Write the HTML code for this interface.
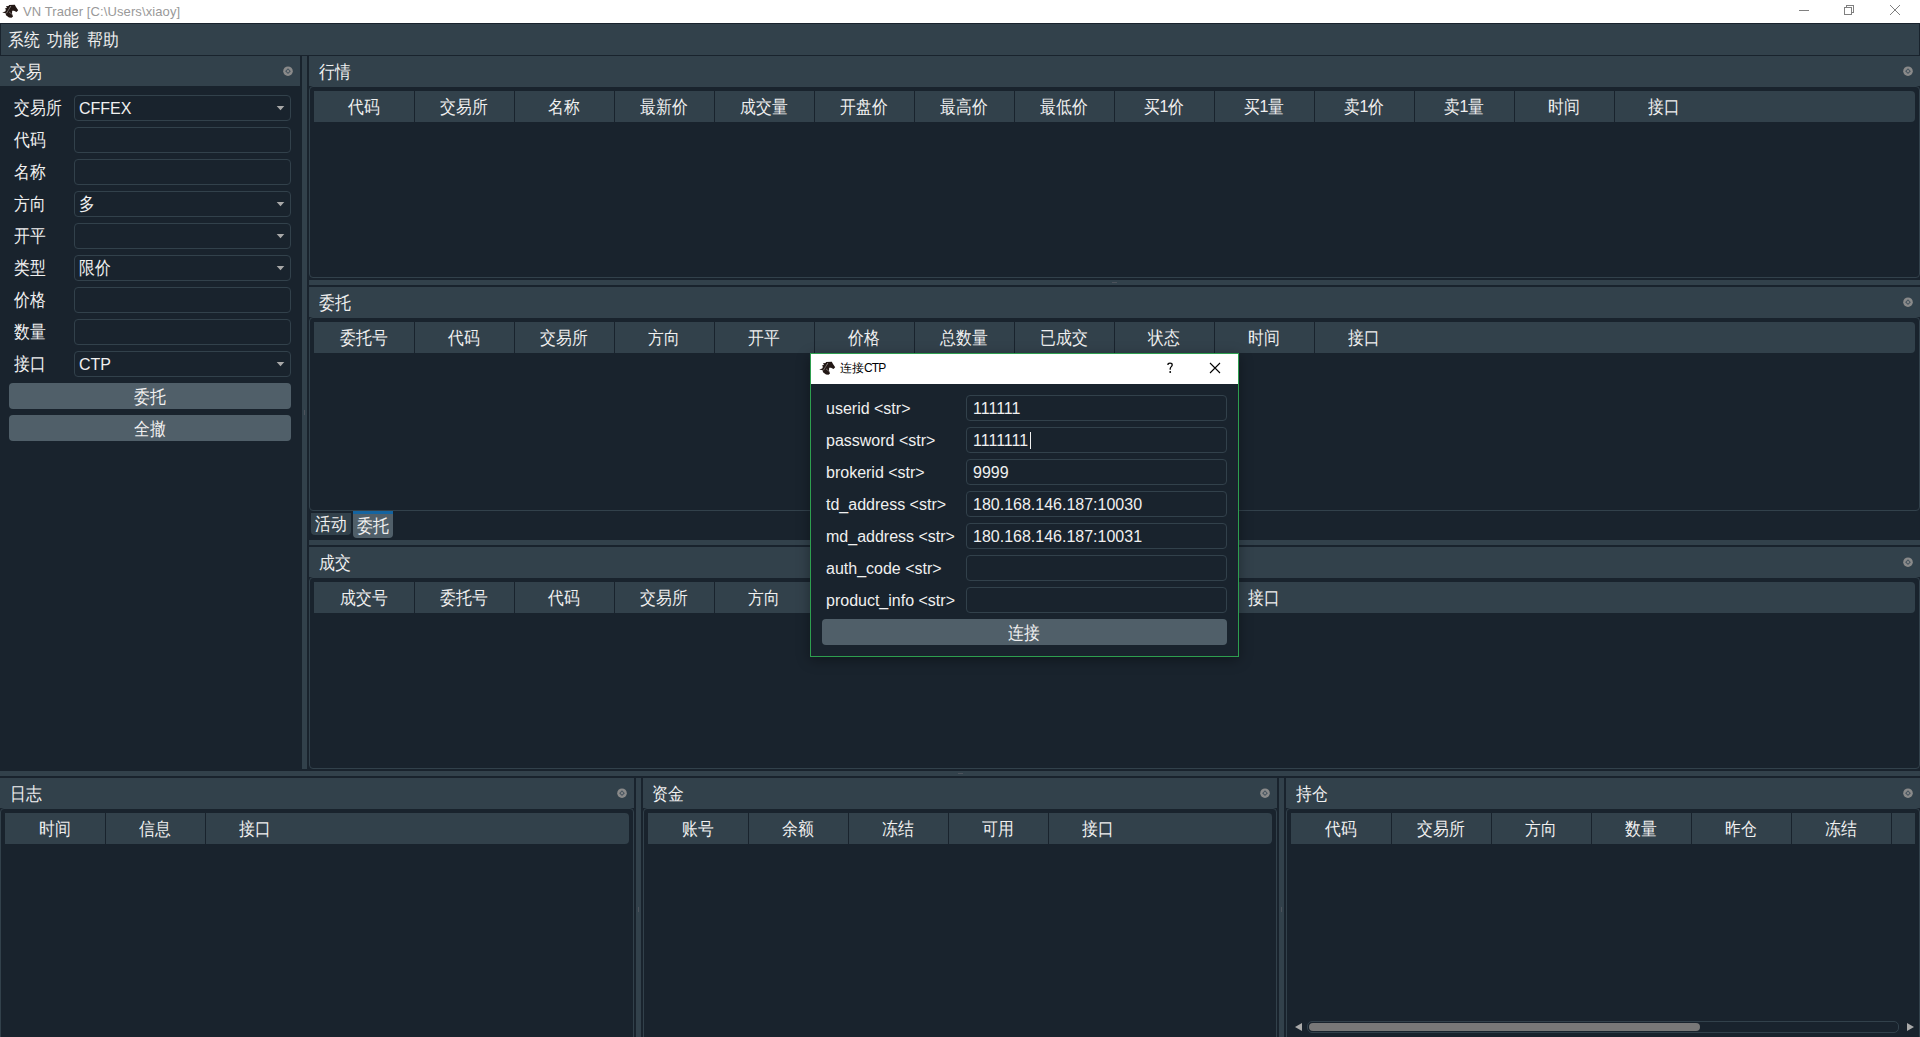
<!DOCTYPE html>
<html><head><meta charset="utf-8">
<style>
html,body{margin:0;padding:0;}
body{width:1920px;height:1037px;overflow:hidden;background:#19232D;position:relative;font-family:"Liberation Sans",sans-serif;color:#F0F0F0;font-size:16px;}
.a{position:absolute;box-sizing:border-box;}
.n{background:#32414B;}
.l{background:#505F69;}
.t{position:absolute;white-space:nowrap;line-height:16px;font-size:16px;}
.box{position:absolute;box-sizing:border-box;border:1px solid #32414B;border-radius:4px;background:#19232D;}
.arr{position:absolute;width:0;height:0;border-left:4px solid transparent;border-right:4px solid transparent;border-top:5px solid #AAAAAA;}
.btn{position:absolute;box-sizing:border-box;background:#505F69;border-radius:4px;text-align:center;}
.frame{position:absolute;box-sizing:border-box;border:1px solid #32414B;border-radius:4px;}
.hdr{position:absolute;height:31px;background:#32414B;overflow:hidden;}
.hdr div{position:absolute;top:0;height:31px;width:100px;box-sizing:border-box;border-left:1px solid #19232D;text-align:center;line-height:31px;font-size:16px;padding-right:1px;}
.hdr div:first-child{border-left:none;}
.flt{position:absolute;width:10px;height:10px;box-sizing:border-box;border-radius:50%;border:2px solid #9A9A9A;}
.flt:after{content:"";position:absolute;left:2px;top:2px;width:2px;height:2px;background:#9A9A9A;}
.cj{display:inline-block;transform:scaleY(1.14);transform-origin:50% 0;}
.hdr .cj{transform-origin:50% 13px;}
</style></head><body>
<!-- window title bar -->
<div class="a" style="left:0;top:0;width:1920px;height:23px;background:#FFFFFF;"></div>
<div class="t" style="left:23px;top:5px;font-size:13px;line-height:14px;color:#999999;letter-spacing:0.1px;">VN Trader [C:\Users\xiaoy]</div>
<!-- window controls -->
<svg class="a" style="left:0;top:0;" width="1920" height="23">
<g stroke="#808080" stroke-width="1" fill="none" shape-rendering="crispEdges">
<line x1="1799" y1="10.5" x2="1809" y2="10.5"/>
<rect x="1844.5" y="7.5" width="7" height="7"/>
<polyline points="1846.5,7.5 1846.5,5.5 1853.5,5.5 1853.5,12.5 1851.5,12.5"/>
</g>
<g stroke="#808080" stroke-width="1" fill="none">
<line x1="1890" y1="5" x2="1900" y2="15"/>
<line x1="1900" y1="5" x2="1890" y2="15"/>
</g>
</svg>

<!-- icons -->
<svg class="a" style="left:0;top:0;" width="22" height="22"><path d="M9,5 L14.8,4.8 L16,7 L18.2,10.2 L16.5,12 L14,10.8 L12.2,10.8 L12,13.5 L13,16.5 L11.5,17.8 L9,17.4 L6,15.3 L5.6,13.2 L2.2,12.6 L5.2,11.5 L6,9.7 L4.8,8.7 L7,7.7 L5.9,6.3 L8.6,5.9 Z" fill="#231815"/>
<path d="M10.9,6 L6.4,13.4 M9.4,12.2 L12.6,14.8" stroke="#FFFFFF" stroke-width="0.6" stroke-dasharray="0.9,0.5" fill="none"/></svg>

<!-- menubar -->
<div class="a n" style="left:1px;top:24px;width:1918px;height:31px;"></div>
<div class="t" style="left:8px;top:31px;"><span class="cj">系统</span></div>
<div class="t" style="left:47px;top:31px;"><span class="cj">功能</span></div>
<div class="t" style="left:87px;top:31px;"><span class="cj">帮助</span></div>

<!-- left dock -->
<div class="a n" style="left:0;top:56px;width:300px;height:30px;"></div>
<div class="t" style="left:10px;top:63px;"><span class="cj">交易</span></div>
<svg class="a" style="left:283px;top:66px;" width="10" height="10"><circle cx="5" cy="5.2" r="4.8" fill="#8A8A8A"/><path d="M5,2.3 L7.9,5.2 L5,8.1 L2.1,5.2 Z" fill="#4B5862"/><circle cx="5" cy="5.2" r="1.1" fill="#8A8A8A"/></svg>

<div class="t" style="left:14px;top:99px;"><span class="cj">交易所</span></div>
<div class="box" style="left:74px;top:95px;width:217px;height:26px;"></div>
<div class="t" style="left:79px;top:101px;">CFFEX</div>
<svg class="a" style="left:276px;top:105px;" width="10" height="8"><path d="M0.7,0.9 L8.3,0.9 L4.5,5.3 Z" fill="#A8A8A8"/></svg>
<div class="t" style="left:14px;top:131px;"><span class="cj">代码</span></div>
<div class="box" style="left:74px;top:127px;width:217px;height:26px;"></div>
<div class="t" style="left:14px;top:163px;"><span class="cj">名称</span></div>
<div class="box" style="left:74px;top:159px;width:217px;height:26px;"></div>
<div class="t" style="left:14px;top:195px;"><span class="cj">方向</span></div>
<div class="box" style="left:74px;top:191px;width:217px;height:26px;"></div>
<div class="t" style="left:79px;top:195px;"><span class="cj">多</span></div>
<svg class="a" style="left:276px;top:201px;" width="10" height="8"><path d="M0.7,0.9 L8.3,0.9 L4.5,5.3 Z" fill="#A8A8A8"/></svg>
<div class="t" style="left:14px;top:227px;"><span class="cj">开平</span></div>
<div class="box" style="left:74px;top:223px;width:217px;height:26px;"></div>
<svg class="a" style="left:276px;top:233px;" width="10" height="8"><path d="M0.7,0.9 L8.3,0.9 L4.5,5.3 Z" fill="#A8A8A8"/></svg>
<div class="t" style="left:14px;top:259px;"><span class="cj">类型</span></div>
<div class="box" style="left:74px;top:255px;width:217px;height:26px;"></div>
<div class="t" style="left:79px;top:259px;"><span class="cj">限价</span></div>
<svg class="a" style="left:276px;top:265px;" width="10" height="8"><path d="M0.7,0.9 L8.3,0.9 L4.5,5.3 Z" fill="#A8A8A8"/></svg>
<div class="t" style="left:14px;top:291px;"><span class="cj">价格</span></div>
<div class="box" style="left:74px;top:287px;width:217px;height:26px;"></div>
<div class="t" style="left:14px;top:323px;"><span class="cj">数量</span></div>
<div class="box" style="left:74px;top:319px;width:217px;height:26px;"></div>
<div class="t" style="left:14px;top:355px;"><span class="cj">接口</span></div>
<div class="box" style="left:74px;top:351px;width:217px;height:26px;"></div>
<div class="t" style="left:79px;top:357px;">CTP</div>
<svg class="a" style="left:276px;top:361px;" width="10" height="8"><path d="M0.7,0.9 L8.3,0.9 L4.5,5.3 Z" fill="#A8A8A8"/></svg>
<div class="btn" style="left:9px;top:383px;width:282px;height:26px;"></div>
<div class="t" style="left:134px;top:388px;"><span class="cj">委托</span></div>
<div class="btn" style="left:9px;top:415px;width:282px;height:26px;"></div>
<div class="t" style="left:134px;top:420px;"><span class="cj">全撤</span></div>
<!-- splitters -->
<div class="a n" style="left:302px;top:56px;width:5px;height:713px;"></div>
<div class="a n" style="left:309px;top:280px;width:1611px;height:5px;"></div>
<div class="a n" style="left:309px;top:540px;width:1611px;height:5px;"></div>
<div class="a n" style="left:0;top:771px;width:1920px;height:5px;"></div>
<div class="a n" style="left:636px;top:778px;width:5px;height:259px;"></div>
<div class="a n" style="left:1279px;top:778px;width:5px;height:259px;"></div>

<!-- grips -->
<div class="a" style="left:304px;top:410px;width:1px;height:5px;background:#4C525B;"></div>
<div class="a" style="left:1112px;top:282px;width:5px;height:1px;background:#4C525B;"></div>
<div class="a" style="left:1112px;top:542px;width:5px;height:1px;background:#4C525B;"></div>
<div class="a" style="left:958px;top:773px;width:5px;height:1px;background:#4C525B;"></div>
<div class="a" style="left:638px;top:907px;width:1px;height:5px;background:#4C525B;"></div>
<div class="a" style="left:1281px;top:907px;width:1px;height:5px;background:#4C525B;"></div>
<!-- right docks titles -->
<div class="a n" style="left:309px;top:56px;width:1611px;height:30px;"></div>
<div class="t" style="left:319px;top:63px;"><span class="cj">行情</span></div>
<svg class="a" style="left:1903px;top:66px;" width="10" height="10"><circle cx="5" cy="5.2" r="4.8" fill="#8A8A8A"/><path d="M5,2.3 L7.9,5.2 L5,8.1 L2.1,5.2 Z" fill="#4B5862"/><circle cx="5" cy="5.2" r="1.1" fill="#8A8A8A"/></svg>
<div class="frame" style="left:309px;top:86px;width:1611px;height:192px;"></div>

<div class="a n" style="left:309px;top:287px;width:1611px;height:30px;"></div>
<div class="t" style="left:319px;top:294px;"><span class="cj">委托</span></div>
<svg class="a" style="left:1903px;top:297px;" width="10" height="10"><circle cx="5" cy="5.2" r="4.8" fill="#8A8A8A"/><path d="M5,2.3 L7.9,5.2 L5,8.1 L2.1,5.2 Z" fill="#4B5862"/><circle cx="5" cy="5.2" r="1.1" fill="#8A8A8A"/></svg>
<div class="frame" style="left:309px;top:317px;width:1611px;height:194px;"></div>

<div class="a n" style="left:309px;top:547px;width:1611px;height:30px;"></div>
<div class="t" style="left:319px;top:554px;"><span class="cj">成交</span></div>
<svg class="a" style="left:1903px;top:557px;" width="10" height="10"><circle cx="5" cy="5.2" r="4.8" fill="#8A8A8A"/><path d="M5,2.3 L7.9,5.2 L5,8.1 L2.1,5.2 Z" fill="#4B5862"/><circle cx="5" cy="5.2" r="1.1" fill="#8A8A8A"/></svg>
<div class="frame" style="left:309px;top:577px;width:1611px;height:192px;"></div>

<div class="hdr" style="left:314px;top:91px;width:1601px;border-top-right-radius:4px;border-bottom-right-radius:4px;"><div style="left:0px;"><span class="cj">代码</span></div><div style="left:100px;"><span class="cj">交易所</span></div><div style="left:200px;"><span class="cj">名称</span></div><div style="left:300px;"><span class="cj">最新价</span></div><div style="left:400px;"><span class="cj">成交量</span></div><div style="left:500px;"><span class="cj">开盘价</span></div><div style="left:600px;"><span class="cj">最高价</span></div><div style="left:700px;"><span class="cj">最低价</span></div><div style="left:800px;"><span class="cj">买</span>1<span class="cj">价</span></div><div style="left:900px;"><span class="cj">买</span>1<span class="cj">量</span></div><div style="left:1000px;"><span class="cj">卖</span>1<span class="cj">价</span></div><div style="left:1100px;"><span class="cj">卖</span>1<span class="cj">量</span></div><div style="left:1200px;"><span class="cj">时间</span></div><div style="left:1300px;"><span class="cj">接口</span></div></div>
<div class="hdr" style="left:314px;top:322px;width:1601px;border-top-right-radius:4px;border-bottom-right-radius:4px;"><div style="left:0px;"><span class="cj">委托号</span></div><div style="left:100px;"><span class="cj">代码</span></div><div style="left:200px;"><span class="cj">交易所</span></div><div style="left:300px;"><span class="cj">方向</span></div><div style="left:400px;"><span class="cj">开平</span></div><div style="left:500px;"><span class="cj">价格</span></div><div style="left:600px;"><span class="cj">总数量</span></div><div style="left:700px;"><span class="cj">已成交</span></div><div style="left:800px;"><span class="cj">状态</span></div><div style="left:900px;"><span class="cj">时间</span></div><div style="left:1000px;"><span class="cj">接口</span></div></div>
<div class="hdr" style="left:314px;top:582px;width:1601px;border-top-right-radius:4px;border-bottom-right-radius:4px;"><div style="left:0px;"><span class="cj">成交号</span></div><div style="left:100px;"><span class="cj">委托号</span></div><div style="left:200px;"><span class="cj">代码</span></div><div style="left:300px;"><span class="cj">交易所</span></div><div style="left:400px;"><span class="cj">方向</span></div><div style="left:500px;"><span class="cj">开平</span></div><div style="left:600px;"><span class="cj">价格</span></div><div style="left:700px;"><span class="cj">数量</span></div><div style="left:800px;"><span class="cj">时间</span></div><div style="left:900px;"><span class="cj">接口</span></div></div>
<div class="hdr" style="left:5px;top:813px;width:624px;border-top-right-radius:4px;border-bottom-right-radius:4px;"><div style="left:0px;"><span class="cj">时间</span></div><div style="left:100px;"><span class="cj">信息</span></div><div style="left:200px;"><span class="cj">接口</span></div></div>
<div class="hdr" style="left:648px;top:813px;width:624px;border-top-right-radius:4px;border-bottom-right-radius:4px;"><div style="left:0px;"><span class="cj">账号</span></div><div style="left:100px;"><span class="cj">余额</span></div><div style="left:200px;"><span class="cj">冻结</span></div><div style="left:300px;"><span class="cj">可用</span></div><div style="left:400px;"><span class="cj">接口</span></div></div>
<div class="hdr" style="left:1291px;top:813px;width:624px;"><div style="left:0px;"><span class="cj">代码</span></div><div style="left:100px;"><span class="cj">交易所</span></div><div style="left:200px;"><span class="cj">方向</span></div><div style="left:300px;"><span class="cj">数量</span></div><div style="left:400px;"><span class="cj">昨仓</span></div><div style="left:500px;"><span class="cj">冻结</span></div><div style="left:600px;"><span class="cj">均价</span></div><div style="left:700px;"><span class="cj">盈亏</span></div><div style="left:800px;"><span class="cj">接口</span></div></div>
<!-- bottom docks -->
<div class="a n" style="left:0;top:778px;width:634px;height:30px;"></div>
<div class="t" style="left:10px;top:785px;"><span class="cj">日志</span></div>
<svg class="a" style="left:617px;top:788px;" width="10" height="10"><circle cx="5" cy="5.2" r="4.8" fill="#8A8A8A"/><path d="M5,2.3 L7.9,5.2 L5,8.1 L2.1,5.2 Z" fill="#4B5862"/><circle cx="5" cy="5.2" r="1.1" fill="#8A8A8A"/></svg>
<div class="frame" style="left:0;top:808px;width:634px;height:240px;"></div>

<div class="a n" style="left:643px;top:778px;width:634px;height:30px;"></div>
<div class="t" style="left:652px;top:785px;"><span class="cj">资金</span></div>
<svg class="a" style="left:1260px;top:788px;" width="10" height="10"><circle cx="5" cy="5.2" r="4.8" fill="#8A8A8A"/><path d="M5,2.3 L7.9,5.2 L5,8.1 L2.1,5.2 Z" fill="#4B5862"/><circle cx="5" cy="5.2" r="1.1" fill="#8A8A8A"/></svg>
<div class="frame" style="left:643px;top:808px;width:634px;height:240px;"></div>

<div class="a n" style="left:1286px;top:778px;width:634px;height:30px;"></div>
<div class="t" style="left:1296px;top:785px;"><span class="cj">持仓</span></div>
<svg class="a" style="left:1903px;top:788px;" width="10" height="10"><circle cx="5" cy="5.2" r="4.8" fill="#8A8A8A"/><path d="M5,2.3 L7.9,5.2 L5,8.1 L2.1,5.2 Z" fill="#4B5862"/><circle cx="5" cy="5.2" r="1.1" fill="#8A8A8A"/></svg>
<div class="frame" style="left:1286px;top:808px;width:634px;height:240px;"></div>

<!-- tabs -->
<div class="a n" style="left:311px;top:513px;width:40px;height:22px;border-bottom-left-radius:4px;border-bottom-right-radius:4px;"></div>
<div class="t" style="left:315px;top:515px;"><span class="cj">活动</span></div>
<div class="a l" style="left:353px;top:511px;width:40px;height:27px;border-top:3px solid #1464A0;border-bottom-left-radius:4px;border-bottom-right-radius:4px;"></div>
<div class="t" style="left:357px;top:517px;"><span class="cj">委托</span></div>
<!-- scrollbar -->
<div class="a" style="left:1295px;top:1023px;width:0;height:0;border-top:4px solid transparent;border-bottom:4px solid transparent;border-right:7px solid #AAAAAA;"></div>
<div class="a" style="left:1307px;top:1021px;width:592px;height:12px;border:1px solid #32414B;border-radius:5px;"></div>
<div class="a" style="left:1309px;top:1023px;width:391px;height:8px;background:#787878;border-radius:4px;"></div>
<div class="a" style="left:1907px;top:1023px;width:0;height:0;border-top:4px solid transparent;border-bottom:4px solid transparent;border-left:7px solid #AAAAAA;"></div>

<!-- dialog -->
<div class="a" style="left:810px;top:353px;width:429px;height:304px;border:1px solid #2E9E4F;background:#19232D;box-shadow:0 3px 12px rgba(0,0,0,0.35);"></div>
<div class="a" style="left:811px;top:354px;width:427px;height:30px;background:#FFFFFF;"></div>
<svg class="a" style="left:817px;top:357px;" width="22" height="22"><path d="M9,5 L14.8,4.8 L16,7 L18.2,10.2 L16.5,12 L14,10.8 L12.2,10.8 L12,13.5 L13,16.5 L11.5,17.8 L9,17.4 L6,15.3 L5.6,13.2 L2.2,12.6 L5.2,11.5 L6,9.7 L4.8,8.7 L7,7.7 L5.9,6.3 L8.6,5.9 Z" fill="#231815"/>
<path d="M10.9,6 L6.4,13.4 M9.4,12.2 L12.6,14.8" stroke="#FFFFFF" stroke-width="0.6" stroke-dasharray="0.9,0.5" fill="none"/></svg>
<svg class="a" style="left:1160px;top:358px;" width="20" height="20"><path d="M7.9,7 C7.9,5.6 8.9,5.2 10,5.2 C11.3,5.2 12.2,5.9 12.2,7 C12.2,8.4 10.4,8.8 10.2,10.6 L10.2,11.8" stroke="#000" stroke-width="1.25" fill="none"/><circle cx="10.2" cy="14" r="0.9" fill="#000"/></svg>
<svg class="a" style="left:1205px;top:358px;" width="20" height="20"><path d="M5,5 L15,15 M15,5 L5,15" stroke="#000" stroke-width="1.1" fill="none"/></svg>
<div class="t" style="left:840px;top:362px;font-size:12px;line-height:12px;color:#000;">连接<span style="letter-spacing:-0.9px;">CTP</span></div>
<div class="t" style="left:826px;top:401px;">userid &lt;str&gt;</div>
<div class="box" style="left:966px;top:395px;width:261px;height:26px;"></div>
<div class="t" style="left:973px;top:401px;">111111</div>
<div class="t" style="left:826px;top:433px;">password &lt;str&gt;</div>
<div class="box" style="left:966px;top:427px;width:261px;height:26px;"></div>
<div class="t" style="left:973px;top:433px;">1111111</div>
<div class="t" style="left:826px;top:465px;">brokerid &lt;str&gt;</div>
<div class="box" style="left:966px;top:459px;width:261px;height:26px;"></div>
<div class="t" style="left:973px;top:465px;">9999</div>
<div class="t" style="left:826px;top:497px;">td_address &lt;str&gt;</div>
<div class="box" style="left:966px;top:491px;width:261px;height:26px;"></div>
<div class="t" style="left:973px;top:497px;">180.168.146.187:10030</div>
<div class="t" style="left:826px;top:529px;">md_address &lt;str&gt;</div>
<div class="box" style="left:966px;top:523px;width:261px;height:26px;"></div>
<div class="t" style="left:973px;top:529px;">180.168.146.187:10031</div>
<div class="t" style="left:826px;top:561px;">auth_code &lt;str&gt;</div>
<div class="box" style="left:966px;top:555px;width:261px;height:26px;"></div>
<div class="t" style="left:826px;top:593px;">product_info &lt;str&gt;</div>
<div class="box" style="left:966px;top:587px;width:261px;height:26px;"></div>
<div class="a" style="left:1030px;top:432px;width:1px;height:17px;background:#F0F0F0;"></div>
<div class="btn" style="left:822px;top:619px;width:405px;height:26px;"></div>
<div class="t" style="left:1008px;top:624px;"><span class="cj">连接</span></div>
</body></html>
